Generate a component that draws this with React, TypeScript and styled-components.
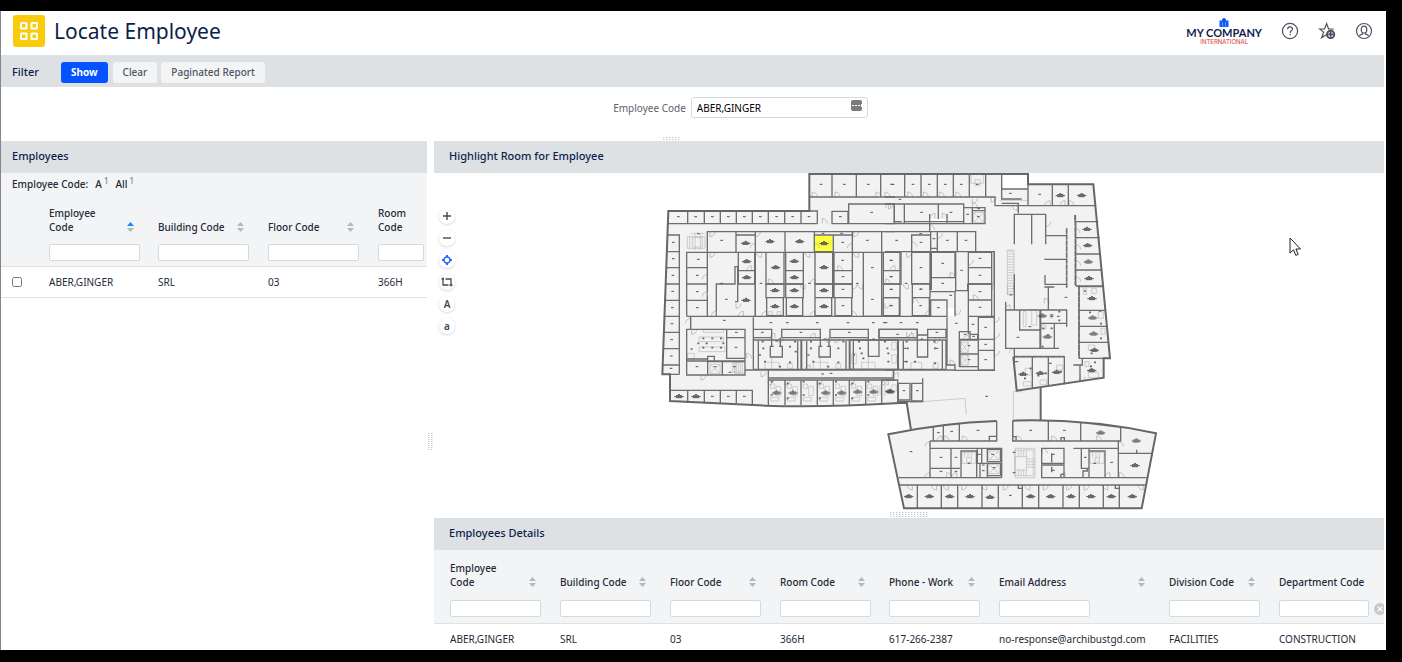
import React from "react";
import styled, { createGlobalStyle, css } from "styled-components";

const GlobalStyle = createGlobalStyle`
  *, *::before, *::after { box-sizing: border-box; }
  body {
    margin: 0;
    background: #000;
    color: #232a36;
    font-family: "Noto Sans", "Open Sans", sans-serif;
    font-size: 10px;
    line-height: 14px;
  }
  button, input { font: inherit; color: inherit; }
`;

const Shell = styled.div`
  display: flex;
  height: 100vh;
  padding: 11px 16px 12px 0;
`;

const Page = styled.main`
  flex: 1;
  min-width: 0;
  display: flex;
  flex-direction: column;
  overflow: hidden;
  background: #fff;
  border-left: 1px solid #85878a;
  padding-right: 2px;
`;

const TopBar = styled.header`
  flex: none;
  display: flex;
  align-items: center;
  height: 44px;
  padding: 0 12px;
`;

const AppTile = styled.div`
  display: grid;
  place-items: center;
  width: 32px;
  height: 32px;
  margin: -4px 9px 0 0;
  border-radius: 3px;
  background: #facb0a;
`;

const Title = styled.h1`
  flex: 1;
  margin: 0;
  padding-bottom: 4px;
  font-size: 21px;
  line-height: 28px;
  font-weight: 400;
  color: #0b1f4b;
`;

const Company = styled.div`
  display: flex;
  flex-direction: column;
  align-items: center;
  margin-right: 19px;
  padding-bottom: 4px;
  font-family: Lato, sans-serif;
`;

const CompanyName = styled.span`
  font-size: 11px;
  line-height: 12px;
  font-weight: 700;
  color: #10234d;
`;

const CompanySub = styled.span`
  font-family: Inter, sans-serif;
  font-size: 6px;
  line-height: 6px;
  color: #d8352b;
`;

const IconBar = styled.nav`
  display: flex;
  gap: 19px;
  padding-bottom: 4px;
  margin-right: -1px;
`;

const IconButton = styled.button`
  display: grid;
  place-items: center;
  width: 18px;
  height: 18px;
  padding: 0;
  border: 0;
  background: none;
`;

const Bar = styled.div`
  flex: none;
  display: flex;
  align-items: center;
  height: 32px;
  padding: 0 11px;
  background: #dee1e4;
`;

const BarTitle = styled.h2<{ $inset?: number }>`
  margin: 0;
  padding: 0 ${(p) => p.$inset ?? 0}px 2px;
  font-size: 11px;
  line-height: 16px;
  font-weight: 500;
  color: #0b1f4b;
`;

const FilterBar = styled(Bar)`
  padding-top: 3px;
`;

const Actions = styled.div`
  display: flex;
  gap: 4px;
  margin: -1px 0 0 22px;
`;

const Button = styled.button<{ $primary?: boolean }>`
  height: 21px;
  padding: 0 10px;
  border: 0;
  border-radius: 3px;
  background: #f3f4f6;
  color: #50565f;
  font-weight: 500;
  ${(p) =>
    p.$primary &&
    css`
      margin-right: 1px;
      background: #0552ff;
      color: #fff;
      font-weight: 700;
    `}
`;

const FilterForm = styled.form`
  flex: none;
  position: relative;
  display: flex;
  align-items: flex-start;
  justify-content: center;
  height: 54px;
  padding: 10px 0 0 96px;
`;

const FilterLabel = styled.label`
  margin: 4px 5px 0 0;
  color: #5c626c;
`;

const Lookup = styled.div`
  display: flex;
  align-items: flex-start;
  width: 177px;
  height: 21px;
  padding-right: 5px;
  border: 1px solid #d3dade;
  border-radius: 3px;
`;

const LookupInput = styled.input`
  flex: 1;
  min-width: 0;
  height: 20px;
  padding: 0 5px;
  border: 0;
  background: none;
  color: #000;
  outline: 0;
`;

const LookupButton = styled.button`
  width: 11px;
  height: 11px;
  margin-top: 2px;
  padding: 0;
  border: 0;
  border-radius: 2px;
  background: #7b7b7b;
  svg { display: block; }
`;

const Workspace = styled.div`
  flex: 1;
  min-height: 0;
  display: grid;
  grid-template-columns: 426px 7px minmax(0, 1fr);
`;

const Panel = styled.section`
  display: flex;
  flex-direction: column;
  min-width: 0;
  min-height: 0;
  overflow: hidden;
`;

const Splitter = styled.div`
  display: flex;
  align-items: center;
  justify-content: center;
  padding-top: 92px;
`;

const Grip = styled.div<{ $w: number; $h: number }>`
  width: ${(p) => p.$w}px;
  height: ${(p) => p.$h}px;
  background-image:
    linear-gradient(transparent 1px, #fff 1px),
    linear-gradient(90deg, #c2c4c6 1px, #e8e9ea 1px, #e8e9ea 2px, #fff 2px);
  background-size: 3px 2px;
`;

const FormGrip = styled(Grip)`
  position: absolute;
  left: 662px;
  bottom: 0;
`;

const IndexRow = styled.div`
  display: flex;
  gap: 7px;
  height: 24px;
  padding: 4px 11px 0;
  background: #f3f4f6;
  font-weight: 500;
`;

const IndexLink = styled.a`
  color: inherit;
  text-decoration: none;
  sup {
    margin-left: 2px;
    font-size: 8px;
    line-height: 8px;
    color: #7d8187;
  }
`;

const DataTable = styled.table`
  width: 100%;
  table-layout: fixed;
  border-collapse: collapse;
`;

const HeadRow = styled.tr<{ $tall?: boolean }>`
  height: ${(p) => (p.$tall ? 41 : 39)}px;
  background: #f3f4f6;
`;

const FilterRow = styled.tr<{ $tall?: boolean }>`
  height: ${(p) => (p.$tall ? 32 : 30)}px;
  background: #f3f4f6;
  border-bottom: 1px solid #dfe2e4;
`;

const Row = styled.tr`
  height: 31px;
  border-bottom: 1px solid #dfe2e4;
`;

const Th = styled.th<{ $pad: number }>`
  padding: 0 0 2px ${(p) => p.$pad}px;
  text-align: left;
  vertical-align: bottom;
  font-weight: 500;
`;

const ThInner = styled.div<{ $end: number }>`
  display: flex;
  align-items: flex-end;
  justify-content: space-between;
  gap: 8px;
  padding-right: ${(p) => p.$end}px;
`;

const Td = styled.td<{ $pad: number }>`
  padding: 0 0 0 ${(p) => p.$pad}px;
  white-space: nowrap;
  vertical-align: middle;
`;

const ColumnFilter = styled.input<{ $w?: number }>`
  display: block;
  width: ${(p) => p.$w ?? 91}px;
  height: 17px;
  padding: 0 4px;
  border: 1px solid #d3dade;
  border-radius: 2px;
  background: #fff;
`;

const FilterCell = styled.div`
  display: flex;
  align-items: center;
  gap: 5px;
  padding-top: 4px;
`;

const ClearButton = styled.button`
  flex: none;
  width: 12px;
  height: 12px;
  padding: 0;
  border: 0;
  background: none;
  svg { display: block; }
`;

const Check = styled.input`
  display: block;
  width: 10px;
  height: 10px;
  margin: 0;
`;

const MapArea = styled.div`
  position: relative;
  flex: 1;
  min-height: 0;
  display: flex;
  align-items: flex-start;
  overflow: hidden;
`;

const MapTools = styled.div`
  display: flex;
  flex-direction: column;
  gap: 6px;
  padding: 35px 0 0 5px;
`;

const MapTool = styled.button`
  display: grid;
  place-items: center;
  width: 16px;
  height: 16px;
  padding: 0;
  border: 0;
  border-radius: 50%;
  background: #fff;
  box-shadow: 0 1px 3px rgba(0, 0, 0, 0.16);
  color: #454a52;
  font-weight: 600;
`;

const PlanStage = styled.div`
  flex: 1;
  display: flex;
  justify-content: center;
  padding-right: 20px;
`;

const Pointer = styled.svg`
  position: absolute;
  left: 855px;
  top: 64px;
`;

const MapGrip = styled.div`
  flex: none;
  display: flex;
  justify-content: center;
  height: 6px;
`;

const DetailsBody = styled.div`
  flex: none;
  height: 100px;
  overflow: hidden;
`;

/* ---------- floor plan ---------- */

type Box = [number, number, number, number];
type Pt = [number, number];

const boxes = (list: Box[]) =>
  list.map(([x1, y1, x2, y2]) => `M${x1} ${y1}H${x2}V${y2}H${x1}Z`).join("");

const verticals = (xs: number[], y1: number, y2: number) =>
  xs.map((x) => `M${x} ${y1}V${y2}`).join("");

const tags = (list: Pt[]) => list.map(([x, y]) => `M${x - 4} ${y}h8`).join("");

const names = (list: Pt[]) =>
  list
    .map(([x, y]) => `M${x - 3} ${y - 5}h6M${x - 9} ${y - 2}h18M${x - 14} ${y + 1}h28M${x - 9} ${y + 4}h18`)
    .join("");

const swings = (list: [number, number, number, number][]) =>
  list
    .map(([x, y, dx, dy]) => `M${x} ${y}v${dy * 15}A15 15 0 0 ${dx * dy > 0 ? 0 : 1} ${x + dx * 15} ${y}`)
    .join("");

interface Wing {
  at: string;
  walls: string;
  tags: Pt[];
  names: Pt[];
  doors: [number, number, number, number][];
  detail?: string;
}

const wings: Wing[] = [
  {
    at: "0 0",
    walls:
      verticals([531, 604, 677], 27, 96) +
      "M463 96H720M463 138H487V176M40 176H487" +
      verticals([98, 148, 196, 244, 292, 340, 389, 438], 138, 176) +
      boxes([
        [531, 139, 579, 176], [581, 117, 718, 176], [157, 200, 243, 262], [243, 210, 301, 262],
        [301, 200, 390, 262], [390, 200, 478, 262], [478, 210, 535, 260], [535, 210, 592, 262],
        [592, 200, 680, 262], [95, 262, 157, 308], [95, 308, 157, 357], [250, 262, 299, 317],
        [250, 317, 299, 357], [333, 262, 387, 357], [392, 262, 445, 317], [392, 317, 445, 357],
        [480, 262, 533, 357], [537, 262, 592, 317], [537, 317, 592, 357], [625, 262, 680, 454],
        [685, 262, 735, 317], [685, 317, 735, 357],
      ]) +
      "M532 176H720M157 200H720M95 262H720M37 210H73V628M36 260H73M34 308H73M31 357H73M95 357V454M157 357V454M184 454V357H240V305H248V410H240M301 262V454",
    tags: [
      [498, 58], [568, 58], [640, 58], [710, 58], [70, 155], [122, 155], [172, 155], [220, 155], [268, 155],
      [316, 155], [365, 155], [413, 155], [462, 155], [556, 155], [650, 142], [200, 226], [563, 232], [637, 226],
      [55, 232], [55, 281], [54, 331], [130, 283], [127, 331], [563, 286], [564, 335], [652, 308], [709, 286],
      [709, 335], [463, 355], [607, 355], [318, 355], [130, 206], [504, 205], [560, 205], [200, 355],
    ],
    names: [
      [272, 234], [345, 229], [434, 229], [507, 235], [275, 289], [275, 337], [362, 307], [418, 288],
      [418, 337], [507, 307],
    ],
    doors: [
      [472, 96, 1, -1], [540, 96, 1, -1], [663, 96, 1, -1], [690, 96, 1, -1], [502, 176, 1, -1], [165, 200, 1, 1],
      [301, 250, -1, -1], [301, 200, 1, 1], [592, 250, -1, -1], [596, 200, 1, 1], [478, 250, 1, -1], [165, 262, 1, 1],
      [290, 317, -1, -1], [320, 262, -1, 1], [465, 262, -1, 1], [610, 262, -1, 1], [157, 343, -1, -1],
      [340, 357, 1, -1], [450, 357, -1, 1], [480, 357, -1, -1], [592, 357, 1, 1], [623, 357, -1, 1], [548, 317, 1, -1],
      [706, 130, -1, -1],
    ],
    detail: "M97 215H150V250H97ZM112 218H142V246H112ZM108 205H150M104 215V250M120 205V255M136 205V255",
  },
  {
    at: "0 360",
    walls:
      "M28 46H73M26 94H73M24 142H73M23 191H73M22 240H73M22 268H73M95 46H157M95 94H720M301 -3V94M107 94V133" +
      "M295 97V255M270 255H720M340 255V360M340 279H716V255M340 285H720" +
      boxes([
        [333, -3, 387, 38], [392, -3, 445, 38], [480, -3, 533, 38], [537, -3, 592, 38], [335, 38, 385, 92],
        [394, 38, 443, 92], [480, 38, 530, 92], [540, 38, 590, 92], [685, -3, 735, 38], [685, 38, 735, 92],
        [95, 133, 270, 228], [215, 133, 270, 158], [215, 158, 270, 220], [95, 222, 158, 270], [158, 230, 202, 270],
        [202, 230, 270, 270], [295, 133, 350, 158], [380, 133, 496, 158], [525, 133, 640, 158], [672, 133, 787, 158],
        [295, 165, 438, 253], [440, 165, 583, 253], [583, 165, 728, 253], [158, 214, 178, 228],
      ]) +
      "M350 158V184H346V216H382V184H376V158M496 158V184H492V216H526V184H522V158M640 158V184V214H672V184V158M346 184H356M372 184H382M492 184H502M516 184H526" +
      "M310 168V253M428 168V253M455 168V253M573 168V253M595 168V253" +
      verticals([390, 438, 487, 535, 583, 632, 680], 285, 360) +
      "M45 316H292V358" +
      verticals([98, 148, 196, 244], 316, 354),
    tags: [
      [53, 19], [52, 68], [51, 116], [50, 164], [49, 213], [48, 250], [127, 20], [127, 68], [214, 43], [564, 13],
      [564, 62], [652, 43], [708, 13], [708, 62], [208, 106], [244, 142], [243, 187], [126, 245], [180, 245],
      [322, 142], [438, 142], [583, 142], [365, 168], [510, 162], [656, 162], [528, 265], [503, 267], [172, 334],
      [220, 334], [268, 334], [348, 113], [397, 113], [487, 113], [579, 113], [655, 113], [688, 113], [238, 245],
      [225, 262],
    ],
    names: [
      [273, 45], [360, 16], [418, 16], [507, 16], [360, 64], [418, 64], [507, 64], [72, 334], [123, 334],
      [365, 323], [414, 323], [512, 323], [560, 323], [608, 320], [656, 320], [706, 320],
    ],
    doors: [
      [107, 115, -1, -1], [110, 133, 1, 1], [157, 35, -1, -1], [243, 55, 1, 1], [265, 94, -1, -1], [335, 94, -1, -1],
      [184, 94, -1, -1], [480, 94, -1, -1], [590, 94, 1, -1], [275, 220, 1, -1], [138, 270, 1, 1], [318, 260, 1, 1],
      [372, 158, 1, 1], [516, 158, 1, 1], [480, 160, -1, -1], [465, 255, -1, -1], [360, 160, -1, -1], [540, 158, 1, 1],
      [340, 285, 1, 1], [390, 285, 1, 1], [487, 285, 1, 1], [583, 285, 1, 1], [680, 285, 1, 1],
    ],
    detail:
      boxes([
        [132, 156, 205, 170], [132, 186, 210, 200], [145, 133, 205, 142], [165, 238, 195, 265], [232, 232, 262, 262],
        [98, 205, 118, 222], [340, 80, 352, 90], [366, 80, 378, 90], [330, 232, 372, 253], [475, 232, 517, 253],
        [620, 232, 660, 253], [398, 236, 412, 250], [543, 236, 557, 250], [590, 206, 604, 236],
        ...[345, 395, 443, 492, 540, 588, 636].flatMap((x): Box[] => [
          [x + 2, 297, x + 14, 310], [x + 18, 304, x + 32, 332], [x + 2, 337, x + 26, 348],
        ]),
      ]) + "M165 238L195 265M195 238L165 265M238 232V262M244 232V262M250 232V262M256 232V262M350 216V253M496 216V253M640 214V253M240 233V265H268",
  },
  {
    at: "690 0",
    walls:
      verticals([59, 108, 157, 205, 253, 302], 27, 96) +
      "M0 96H330V122H632M350 27V102H410M350 72H429M429 58V122M502 58V122M550 58V122M350 115H400V145" +
      boxes([
        [28, 117, 58, 175], [58, 117, 236, 170], [236, 128, 262, 176], [262, 128, 300, 176], [262, 137, 300, 176],
        [80, 210, 137, 260], [137, 200, 157, 250], [157, 200, 217, 260], [217, 200, 272, 260], [80, 262, 135, 357],
        [139, 262, 210, 338], [250, 262, 320, 308], [250, 308, 320, 357],
      ]) +
      "M160 117V162M134 147V176M186 147V176M0 176H300M134 176V200M0 200H272M0 260H328V360M48 262V360M212 262V360M80 357H135V375M139 338V375M250 357V375M320 357V375" +
      "M388 238V148H482V238M440 148V238M480 212H545M478 283H545M480 330V358H545M388 328V375" +
      "M570 150V170H640M572 170V363M572 218H644M572 267H648M572 315H651M572 363H655M0 117H28V170H50",
    tags: [
      [24, 58], [84, 58], [133, 58], [181, 58], [229, 58], [277, 58], [45, 103], [110, 142], [198, 142], [248, 148],
      [280, 155], [281, 131], [35, 226], [107, 206], [108, 232], [147, 221], [187, 226], [243, 226], [18, 286],
      [18, 335], [108, 308], [173, 295], [173, 355], [230, 316], [285, 280], [285, 331], [376, 85], [464, 88], [63, 355],
      [108, 372],
    ],
    names: [[526, 91], [590, 91], [606, 192], [608, 241], [610, 290], [612, 340]],
    doors: [
      [68, 96, 1, -1], [115, 96, 1, -1], [163, 96, 1, -1], [212, 96, 1, -1], [318, 96, 1, 1], [262, 100, 1, 1],
      [262, 128, 1, -1], [134, 195, 1, -1], [80, 245, 1, -1], [397, 122, -1, 1], [495, 122, -1, -1], [540, 122, -1, -1],
      [552, 122, 1, -1], [150, 160, -1, -1], [172, 160, 1, -1], [10, 117, 1, 1], [482, 170, 1, 1], [65, 262, 1, 1],
      [250, 285, 1, 1], [195, 338, 1, -1], [30, 317, -1, -1], [570, 205, 1, -1], [572, 253, 1, -1], [572, 302, 1, -1],
      [572, 350, 1, -1], [157, 205, 1, 1], [2, 357, 1, -1], [70, 357, -1, 1],
    ],
    detail:
      "M266 142H296V172H266ZM266 142L296 172M296 142L266 172M258 30V55H296V30M270 44H286V62H270ZM344 106H427M367 255H387V390M367 255V390" +
      Array.from({ length: 17 }, (_, i) => `M367 ${259 + i * 8}h20`).join(""),
  },
  {
    at: "690 360",
    walls:
      "M328 -100V256H210V240H186V97M320 0V94M0 94H186M212 -4V17H248V-4M135 20H210M210 17V94M250 94H328M250 94V148M223 245V140" +
      boxes([
        [-5, 38, 43, 92], [82, 38, 133, 92], [82, -4, 135, 38], [250, -3, 320, 45], [250, 45, 320, 94],
        [137, 45, 186, 94], [223, 140, 255, 163], [255, 148, 278, 163], [225, 165, 280, 207], [225, 207, 280, 245],
        [280, 97, 328, 163], [280, 163, 328, 196], [280, 196, 328, 255], [-18, 133, 97, 158], [128, 133, 183, 158],
        [40, 165, 183, 253], [-105, 165, 38, 253], [97, 150, 128, 216], [40, 295, 75, 345], [80, 295, 113, 348],
        [362, 75, 465, 190], [404, 75, 465, 135], [467, 75, 545, 115], [467, 115, 508, 190],
      ]) +
      "M0 255H210M25 255V280M-10 285H38V353M113 280V350H38M55 168V253M172 168V253" +
      "M362 50V75M388 0V75M490 6V75M478 6H508M545 75V125M362 190H522M582 0V220M582 5H653M582 76H661M582 124H665M582 172H670M582 220H675" +
      "M388 190V215H538V298M442 215V310M490 215V303M490 235H500M585 240V290M565 240H592V220M388 215V230H400",
    tags: [
      [19, 13], [107, 13], [19, 62], [107, 62], [160, 68], [197, 31], [285, 20], [285, 67], [302, 127], [264, 118],
      [214, 115], [240, 148], [266, 154], [252, 182], [252, 224], [302, 178], [302, 224], [38, 148], [156, 142],
      [111, 162], [3, 113], [97, 113], [48, 113], [60, 190], [156, 190], [60, 230], [57, 317], [97, 317], [305, 334],
      [399, 157], [435, 125], [543, 37], [378, 30], [500, 94], [520, 94],
    ],
    names: [
      [472, 92], [487, 155], [621, 40], [623, 98], [626, 146], [628, 195], [414, 267], [466, 264], [515, 261],
      [620, 256], [14, 318],
    ],
    doors: [
      [0, 55, 1, 1], [85, 55, 1, -1], [135, 92, -1, -1], [212, 75, 1, 1], [328, 97, 1, 1], [328, 145, 1, 1], [328, 198, 1, 1],
      [195, 240, 1, -1], [250, 165, -1, -1], [478, 55, 1, -1], [375, 75, -1, -1], [388, 205, -1, -1], [585, 275, 1, 1],
      [10, 285, -1, 1], [40, 278, -1, -1], [65, 140, 1, 1], [85, 160, -1, -1], [150, 160, 1, 1], [265, 45, 1, -1],
    ],
    detail:
      boxes([
        [415, 80, 423, 125], [440, 75, 455, 120], [595, 10, 605, 28], [620, 10, 634, 25], [640, 80, 655, 100],
        [648, 130, 660, 148], [600, 230, 612, 245], [610, 262, 640, 278], [415, 290, 438, 303], [420, 250, 438, 270],
        [465, 285, 485, 298], [515, 240, 533, 255], [470, 120, 482, 132], [495, 88, 505, 98], [145, 232, 159, 250],
        [78, 232, 110, 253], [20, 172, 34, 194], [20, 210, 34, 234], [228, 172, 250, 202], [228, 212, 250, 240],
        [-15, 300, 0, 330], [20, 300, 34, 318], [610, 180, 630, 195],
      ]) +
      "M228 172L250 202M250 172L228 202M228 212L250 240M250 212L228 240M75 353L240 340L244 390M412 320H385V470M367 0V28H388",
  },
  {
    at: "675 660",
    walls:
      "M150 168H350V108M150 190H365V278M150 168V278M55 278H365M160 126V168M190 122V168M238 117V168M213 190V278M150 250H240M60 300H795M398 107V168H722V127" +
      "M505 108V168M602 113V168M715 168V278M580 190H715M485 278H800M715 205H818" +
      verticals([112, 184, 233, 306, 355, 427, 476, 549, 598, 670, 718], 300, 370) +
      boxes([
        [243, 198, 290, 278], [292, 190, 305, 235], [300, 235, 322, 278], [322, 193, 362, 230], [322, 235, 362, 272],
        [485, 190, 552, 235], [485, 240, 552, 278], [604, 190, 627, 250], [627, 198, 675, 278], [328, 154, 350, 168],
        [543, 158, 553, 168], [398, 155, 408, 168], [415, 300, 427, 310], [706, 300, 718, 310], [543, 268, 552, 278],
      ]) +
      "M515 205V232M515 245V262M515 208H524M515 256H524M770 194V205M609 278V258H622V250M305 235H322",
    tags: [
      [93, 200], [175, 143], [215, 139], [294, 136], [452, 136], [553, 136], [183, 217], [183, 259], [228, 217],
      [228, 259], [267, 235], [298, 208], [338, 208], [342, 248], [310, 240], [310, 257], [616, 217], [644, 235],
      [695, 232], [391, 331], [402, 202], [402, 263],
    ],
    names: [
      [662, 143], [769, 167], [765, 241], [86, 334], [148, 334], [209, 334], [270, 334], [330, 336], [452, 334],
      [512, 334], [573, 334], [633, 334], [694, 334], [757, 334],
    ],
    doors: [
      [150, 185, -1, -1], [186, 168, -1, -1], [247, 168, 1, -1], [192, 168, 1, -1], [410, 168, 1, -1], [515, 168, 1, -1],
      [650, 168, 1, -1], [715, 185, 1, -1], [150, 278, -1, -1], [200, 278, 1, -1], [230, 278, -1, -1], [97, 300, -1, 1],
      [170, 300, -1, 1], [205, 300, -1, 1], [245, 300, 1, 1], [320, 300, -1, 1], [370, 300, 1, 1], [450, 300, -1, 1],
      [490, 300, 1, 1], [560, 300, 1, 1], [612, 300, 1, 1], [683, 300, -1, 1], [790, 300, -1, 1], [487, 205, 1, -1],
      [555, 278, -1, -1], [690, 278, -1, -1], [718, 278, 1, -1],
    ],
    detail:
      boxes([
        [405, 190, 465, 278], [405, 215, 440, 255], [405, 195, 460, 272], [246, 202, 287, 235], [260, 218, 274, 232],
        [325, 198, 358, 224], [325, 238, 358, 266], [630, 202, 672, 235], [645, 218, 658, 232],
      ]) +
      "M325 198L358 224M358 198L325 224M325 238L358 266M358 238L325 266M415 195V215M423 195V215M431 195V215M439 195V215M415 255V272M423 255V272M431 255V272M439 255V272M440 222H465M440 230H465M440 238H465M440 246H465M254 202V218M264 202V218M274 202V218M638 202V218M648 202V218M658 202V218",
  },
];

/* fixtures: small desk and sanitary marks scattered through the service rooms */
const fixtures: Pt[] = [
  [145, 520], [172, 520], [198, 520], [145, 548], [172, 548], [198, 548], [130, 535], [155, 535], [205, 535], [110, 552],
  [323, 530], [325, 550], [405, 545], [420, 530], [315, 570], [375, 605], [405, 592], [422, 560], [330, 590], [468, 530],
  [468, 550], [550, 550], [565, 530], [460, 570], [520, 605], [550, 592], [475, 590], [612, 530], [615, 550], [597, 570],
  [620, 565], [625, 580], [690, 530], [697, 550], [700, 590], [755, 530], [758, 550], [755, 590], [838, 530], [840, 550],
  [840, 595], [700, 565], [780, 590], [350, 650], [398, 655], [446, 650], [494, 655], [543, 650], [592, 655], [640, 650],
  [350, 690], [398, 700], [446, 690], [494, 700], [543, 690], [592, 700], [640, 690], [1190, 450], [1213, 440],
  [1213, 466], [1165, 490], [1180, 510], [1190, 490], [1163, 545], [1290, 378], [1335, 438], [1338, 476], [1305, 442],
  [1338, 520], [1310, 565], [1110, 640], [1127, 610], [1173, 625], [1150, 632], [1218, 620], [1320, 592], [1308, 604],
];

const MAIN_FILL =
  "M40 138H463V27H1119V58H1315L1365 580H1346V638L1157 667V790H768L755 713L720 715L330 722L45 708V628H22Z";
const ANNEX = "M700 808Q860 774 1025 768V830H1073V767Q1290 760 1503 805L1460 1030H747Z";

const FloorPlan = () => (
  <svg width="510" height="340" viewBox="0 24 1530 1020" role="img" aria-label="Floor plan">
    <path d={MAIN_FILL} fill="#f2f2f2" />
    <path d={ANNEX} fill="#f2f2f2" />
    <path d="M1020 760H1078V850H1020Z" fill="#f2f2f2" />
    <path d="M1085 677L1157 667V690H1085Z" fill="#f2f2f2" />
    <path d="M1042 30H1117V70H1042ZM824 162H876V174H824ZM876 430H900V453H876Z" fill="#fff" />
    <path d="M480 212H533V259H480Z" fill="#ffff3c" />
    {wings.map((w) => (
      <g key={w.at} transform={`translate(${w.at})`} fill="none">
        {w.detail && <path d={w.detail} stroke="#b9b9b9" strokeWidth="2" />}
        <path d={swings(w.doors)} stroke="#a8a8a8" strokeWidth="2" />
        <path d={w.walls} stroke="#6e6e6e" strokeWidth="4" />
        <path d={tags(w.tags)} stroke="#555" strokeWidth="3" />
        <path d={names(w.names)} stroke="#555" strokeWidth="3" />
      </g>
    ))}
    <path d={fixtures.map(([x, y]) => `M${x - 3} ${y}h6`).join("")} stroke="#666" strokeWidth="5" />
    <path
      d="M1235 190V370M1261 150V360M1272 360V580M1078 575H1228"
      fill="none"
      stroke="#707070"
      strokeWidth="5"
      strokeDasharray="16 2"
    />
    <g fill="none" stroke="#666" strokeWidth="6">
      <path d="M768 795L755 713L720 715Q500 728 330 722L45 708V628H22L40 138H463V27H1119V58H1315L1365 580H1346V638L1085 677L1075 575M1157 667V767" />
      <path d="M1025 768Q860 774 700 808L747 1030H1460L1503 805Q1290 760 1073 767" />
    </g>
  </svg>
);

/* ---------- icons ---------- */

const GridIcon = () => (
  <svg width="18" height="18" viewBox="0 0 18 18" fill="none" stroke="#fff" strokeWidth="2">
    <rect x="1" y="1" width="5.5" height="5.5" rx=".5" />
    <rect x="11.5" y="1" width="5.5" height="5.5" rx=".5" />
    <rect x="1" y="11.5" width="5.5" height="5.5" rx=".5" />
    <rect x="11.5" y="11.5" width="5.5" height="5.5" rx=".5" />
  </svg>
);

const CompanyMark = () => (
  <svg width="10" height="9" viewBox="0 0 10 9" fill="#1259ff">
    <path d="M.5 2.5H3V1h1V0h2v1h1v1.500h2.500V9H.5z" />
    <path d="M3.5 4v5M6.5 4v5" stroke="#fff" strokeWidth=".3" />
  </svg>
);

const HelpIcon = () => (
  <svg width="18" height="18" viewBox="0 0 18 18" fill="none" stroke="#4a5261" strokeWidth="1.2">
    <circle cx="9" cy="9" r="7.6" />
    <path d="M6.6 7.2C6.6 4.200 11.5 4.200 11.5 7c0 1.900-2.400 1.800-2.400 3.900" />
    <path d="M8.500 12.700h1.300" />
  </svg>
);

const StarIcon = () => (
  <svg width="18" height="18" viewBox="0 0 18 18" fill="none" stroke="#4a5261" strokeWidth="1.2">
    <path d="M15.8 7H10.6L8.6 1.6 6.6 7H1.6L5.6 10.1 3.6 15.8 8.6 12.4" />
    <circle cx="12.6" cy="12.4" r="3.6" strokeWidth="2" />
    <path d="M10.2 12.4h4.800M12.6 10v4.800" strokeWidth="1.8" />
  </svg>
);

const UserIcon = () => (
  <svg width="18" height="18" viewBox="0 0 18 18" fill="none" stroke="#4a5261" strokeWidth="1.2">
    <circle cx="9" cy="9" r="7.5" />
    <ellipse cx="9" cy="7.7" rx="2.8" ry="3.5" />
    <path d="M4.500 13.800C5 12.600 6.500 12.800 7.300 12.200V10.400M13.500 13.800C13 12.600 11.500 12.800 10.700 12.200V10.400" />
  </svg>
);

const SortMark = styled.svg`
  flex: none;
  margin-bottom: 2px;
`;

const Sort = ({ up }: { up?: boolean }) => (
  <SortMark width="7" height="10" viewBox="0 0 7 10">
    <path d="M0 4L3.5 0L7 4Z" fill={up ? "#1a86f5" : "#b3b8bf"} />
    <path d="M0 6L3.5 10L7 6Z" fill="#b3b8bf" />
  </SortMark>
);

interface Column {
  label: string;
  value: string;
  width?: number;
  sorted?: boolean;
  noSort?: boolean;
  filterWidth?: number;
  clearable?: boolean;
}

const employeeColumns: Column[] = [
  { label: "Employee Code", value: "ABER,GINGER", width: 109, sorted: true },
  { label: "Building Code", value: "SRL", width: 110 },
  { label: "Floor Code", value: "03", width: 110 },
  { label: "Room Code", value: "366H", noSort: true, filterWidth: 46 },
];

const detailColumns: Column[] = [
  { label: "Employee Code", value: "ABER,GINGER", width: 110 },
  { label: "Building Code", value: "SRL", width: 110 },
  { label: "Floor Code", value: "03", width: 110 },
  { label: "Room Code", value: "366H", width: 109 },
  { label: "Phone - Work", value: "617-266-2387", width: 110 },
  { label: "Email Address", value: "no-response@archibustgd.com", width: 170 },
  { label: "Division Code", value: "FACILITIES", width: 110 },
  { label: "Department Code", value: "CONSTRUCTION", noSort: true, filterWidth: 90, clearable: true },
];

interface GridProps {
  columns: Column[];
  pad: number;
  sortEnd: number;
  selectable?: boolean;
  tall?: boolean;
}

const Grid = ({ columns, pad, sortEnd, selectable, tall }: GridProps) => (
  <DataTable>
    <colgroup>
      {selectable && <col width={36} />}
      {columns.map((c) => (
        <col key={c.label} width={c.width} />
      ))}
    </colgroup>
    <thead>
      <HeadRow $tall={tall}>
        {selectable && <Th $pad={11} aria-label="Select" />}
        {columns.map((c) => (
          <Th key={c.label} $pad={pad} scope="col">
            {c.noSort ? (
              c.label
            ) : (
              <ThInner $end={sortEnd}>
                {c.label}
                <Sort up={c.sorted} />
              </ThInner>
            )}
          </Th>
        ))}
      </HeadRow>
      <FilterRow $tall={tall}>
        {selectable && <Td $pad={11} />}
        {columns.map((c) => (
          <Td key={c.label} $pad={pad}>
            <FilterCell>
              <ColumnFilter $w={c.filterWidth} aria-label={`Filter ${c.label}`} />
              {c.clearable && (
                <ClearButton aria-label="Clear filters">
                  <svg width="12" height="12" viewBox="0 0 12 12">
                    <circle cx="6" cy="6" r="6" fill="#c7cacd" />
                    <path d="M3.6 3.6l4.8 4.8M8.4 3.6l-4.8 4.8" stroke="#fff" strokeWidth="1.3" />
                  </svg>
                </ClearButton>
              )}
            </FilterCell>
          </Td>
        ))}
      </FilterRow>
    </thead>
    <tbody>
      <Row>
        {selectable && (
          <Td $pad={11}>
            <Check type="checkbox" aria-label="Select ABER,GINGER" />
          </Td>
        )}
        {columns.map((c) => (
          <Td key={c.label} $pad={pad}>
            {c.value}
          </Td>
        ))}
      </Row>
    </tbody>
  </DataTable>
);

export default function App() {
  return (
    <Shell>
      <GlobalStyle />
      <Page>
        <TopBar>
          <AppTile>
            <GridIcon />
          </AppTile>
          <Title>Locate Employee</Title>
          <Company>
            <CompanyMark />
            <CompanyName>MY COMPANY</CompanyName>
            <CompanySub>INTERNATIONAL</CompanySub>
          </Company>
          <IconBar>
            <IconButton aria-label="Help"><HelpIcon /></IconButton>
            <IconButton aria-label="Add to favorites"><StarIcon /></IconButton>
            <IconButton aria-label="Account"><UserIcon /></IconButton>
          </IconBar>
        </TopBar>

        <FilterBar>
          <BarTitle>Filter</BarTitle>
          <Actions>
            <Button $primary>Show</Button>
            <Button>Clear</Button>
            <Button>Paginated Report</Button>
          </Actions>
        </FilterBar>

        <FilterForm onSubmit={(e) => e.preventDefault()}>
          <FilterLabel htmlFor="employee-code">Employee Code</FilterLabel>
          <Lookup>
            <LookupInput id="employee-code" defaultValue="ABER,GINGER" />
            <LookupButton type="button" aria-label="Select value">
              <svg width="11" height="11" viewBox="0 0 11 11" fill="#fff">
                <path d="M1 5h2v1H1zM4 5h2v1H4zM7 5h2v1H7zM10 4h1v3h-1z" />
              </svg>
            </LookupButton>
          </Lookup>
          <FormGrip $w={18} $h={4} />
        </FilterForm>

        <Workspace>
          <Panel>
            <Bar>
              <BarTitle>Employees</BarTitle>
            </Bar>
            <IndexRow>
              <span>Employee Code:</span>
              <IndexLink href="#a">A<sup>1</sup></IndexLink>
              <IndexLink href="#all">All<sup>1</sup></IndexLink>
            </IndexRow>
            <Grid columns={employeeColumns} pad={12} sortEnd={12} selectable />
          </Panel>

          <Splitter>
            <Grip $w={6} $h={18} />
          </Splitter>

          <Panel>
            <Bar>
              <BarTitle $inset={4}>Highlight Room for Employee</BarTitle>
            </Bar>
            <MapArea>
              <MapTools>
                <MapTool aria-label="Zoom in">
                  <svg width="10" height="10" viewBox="0 0 10 10" stroke="currentColor" strokeWidth="1.4">
                    <path d="M1 5h8M5 1v8" />
                  </svg>
                </MapTool>
                <MapTool aria-label="Zoom out">
                  <svg width="10" height="10" viewBox="0 0 10 10" stroke="currentColor" strokeWidth="1.4">
                    <path d="M1 5h8" />
                  </svg>
                </MapTool>
                <MapTool aria-label="Fit drawing">
                  <svg width="10" height="10" viewBox="0 0 10 10" fill="none" stroke="#2b66ff" strokeWidth="1.4">
                    <circle cx="5" cy="5" r="3" />
                    <path d="M5 0v2M5 8v2M0 5h2M8 5h2" strokeWidth="2" />
                  </svg>
                </MapTool>
                <MapTool aria-label="Zoom window">
                  <svg width="12" height="10" viewBox="0 0 12 10" fill="none" stroke="currentColor" strokeWidth="1.3">
                    <path d="M2 3v5h5.5M4.500 2H10v5M2 .5V3M.5 2H3M10 6.500v3M8.500 8H11.5" />
                  </svg>
                </MapTool>
                <MapTool aria-label="Larger text">A</MapTool>
                <MapTool aria-label="Smaller text">a</MapTool>
              </MapTools>
              <PlanStage>
                <FloorPlan />
              </PlanStage>
              <Pointer width="13" height="20" viewBox="0 0 13 20">
                <path d="M1 1V16L4.5 12.8L6.8 18.4L9.2 17.4L6.9 12H11.5Z" fill="#fff" stroke="#222" />
              </Pointer>
            </MapArea>
            <MapGrip>
              <Grip $w={38} $h={5} />
            </MapGrip>
            <Bar>
              <BarTitle $inset={4}>Employees Details</BarTitle>
            </Bar>
            <DetailsBody>
              <Grid columns={detailColumns} pad={16} sortEnd={8} tall />
            </DetailsBody>
          </Panel>
        </Workspace>
      </Page>
    </Shell>
  );
}
